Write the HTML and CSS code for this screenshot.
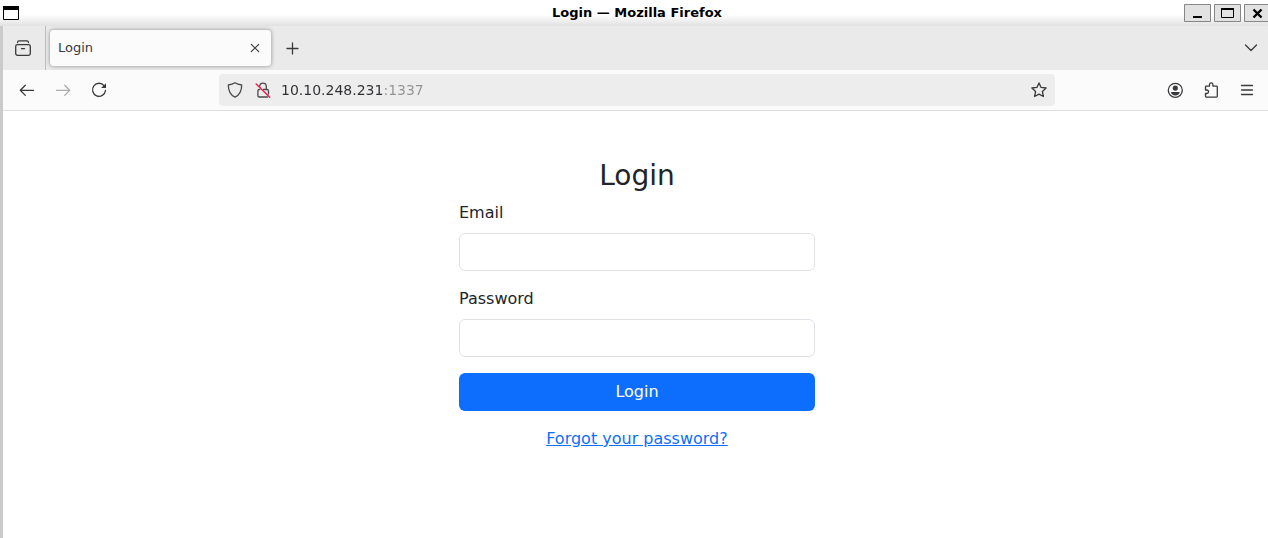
FILE: index.html
```html
<!DOCTYPE html>
<html lang="en">
<head>
<meta charset="utf-8">
<title>Login — Mozilla Firefox</title>
<link rel="stylesheet" href="styles.css">
</head>
<body>
<div class="window">
  <header class="titlebar">
    <button class="window-menu" aria-label="Window menu">
      <svg width="16" height="14" viewBox="0 0 16 14"><path fill="#fff" stroke="#000" d="M.5.5h15v13H.5z"/><path d="M0 0h16v4H0z"/></svg>
    </button>
    <div class="window-title">Login — Mozilla Firefox</div>
    <div class="window-controls">
      <button aria-label="Minimize"><svg width="27" height="18" viewBox="0 0 27 18"><path d="M9 12h9v2H9z"/></svg></button>
      <button aria-label="Maximize"><svg width="27" height="18" viewBox="0 0 27 18"><path fill="none" stroke="#000" d="M7.500 5v8.500h12V5"/><path d="M7 4h13v2H7z"/></svg></button>
      <button aria-label="Close"><svg width="27" height="18" viewBox="0 0 27 18"><path fill="none" stroke="#000" stroke-width="2.400" d="m9.500 5.500 8 8m0-8-8 8"/></svg></button>
    </div>
  </header>
  <div class="browser">
    <nav class="tabstrip">
      <button class="icon-button recent" aria-label="Recent browsing">
        <svg viewBox="0 0 16 16"><rect x=".7" y="4.700" width="14.600" height="10.600" rx="1.800"/><path d="M2.500 2.500Q2.700.9 4 .9h8q1.300 0 1.500 1.600M6.500 8.700h3"/></svg>
      </button>
      <div class="tab">
        <span>Login</span>
        <button class="icon-button tab-close" aria-label="Close tab"><svg viewBox="0 0 16 16"><path stroke-width="1.200" d="m4.300 4.300 7.400 7.400m0-7.400-7.400 7.400"/></svg></button>
      </div>
      <button class="icon-button new-tab" aria-label="New tab"><svg viewBox="0 0 16 16"><path d="M7.500 3v11M2 8.500h11"/></svg></button>
      <button class="icon-button all-tabs" aria-label="List all tabs"><svg viewBox="0 0 16 16"><path d="m2.500 5 5.500 5.500L13.500 5"/></svg></button>
    </nav>
    <div class="toolbar">
      <div class="group">
        <button class="icon-button" aria-label="Back"><svg viewBox="0 0 16 16"><path d="M14.500 8.300h-13M6.300 3.200 1.300 8.300l5 5.100"/></svg></button>
        <button class="icon-button" aria-label="Forward" disabled><svg viewBox="0 0 16 16"><path d="M1.500 8.300h13M9.700 3.200l5 5.100-5 5.100"/></svg></button>
        <button class="icon-button" aria-label="Reload"><svg viewBox="0 0 16 16"><path d="M13.200 3.800A6.500 6.500 0 1 0 14.500 8.500"/><path class="solid" d="M15 1.200v4.900H10.100z"/></svg></button>
      </div>
      <div class="urlbar">
        <svg class="url-icon" viewBox="0 0 16 16"><path d="M8 .8C6.200 2 4 2.700 1.300 3c0 5.500 2 10 6.700 12.200C12.700 13 14.700 8.500 14.700 3 12 2.700 9.800 2 8 .8z"/></svg>
        <svg class="url-icon" viewBox="0 0 16 16"><path d="M4.700 4.500a3.300 3.300 0 0 1 6.600 0v3h.9q1.300 0 1.300 1.300V12M8.500 7.500h2.800M4.700 7.500h-.5q-1.300 0-1.300 1.300v4.900q0 1.300 1.300 1.300h8.300"/><path class="slash" d="M1.200 2 14.700 15.300"/></svg>
        <input class="address" type="text" aria-label="Address" value="10.10.248.231:1337" spellcheck="false">
        <button class="icon-button star" aria-label="Bookmark this page"><svg viewBox="0 0 16 16"><path d="m8 .9 2.100 4.500 5 .6-3.700 3.500 1 5L8 12.200l-4.400 2.300 1-5L.9 6l5-.6z"/></svg></button>
      </div>
      <div class="group">
        <button class="icon-button" aria-label="Account"><svg viewBox="0 0 16 16"><circle cx="8.300" cy="8.300" r="7"/><circle class="solid" cx="8.300" cy="6.100" r="2.600"/><path class="solid" d="M4 9.900h8.600c0 2-2 3.500-4.300 3.500S4 11.900 4 9.900z"/></svg></button>
        <button class="icon-button" aria-label="Extensions"><svg viewBox="0 0 16 16"><path d="M2.500 8V4.900q0-.8.800-.8h3.200V2.600a1.700 1.700 0 0 1 3.400 0v1.500h3.600q.8 0 .8.800v9.400q0 .8-.8.800H3.300q-.8 0-.8-.8v-2.800h1.300a1.700 1.700 0 0 0 0-3.500z"/></svg></button>
        <button class="icon-button" aria-label="Menu"><svg viewBox="0 0 16 16"><path d="M2.500 3.500h11M2.500 8h11M2.500 12.500h11"/></svg></button>
      </div>
    </div>
    <main class="page">
      <form class="login">
        <h1>Login</h1>
        <div class="field"><label for="email">Email</label><input id="email" type="email"></div>
        <div class="field"><label for="password">Password</label><input id="password" type="password"></div>
        <button class="submit" type="submit">Login</button>
        <a class="forgot" href="#">Forgot your password?</a>
      </form>
    </main>
  </div>
</div>
</body>
</html>
```

FILE: styles.css
```css
* { box-sizing: border-box; }
html, body { margin: 0; height: 100%; }
body {
  overflow: hidden;
  background: #fff;
  font: 16px/24px "DejaVu Sans", sans-serif;
  color: #212529;
}
button, input { font: inherit; color: inherit; }
button { margin: 0; padding: 0; border: 0; background: none; }

/* The window runs a little past the right screen edge. */
.window {
  display: flex;
  flex-direction: column;
  width: calc(100% + 3px);
  min-height: 100%;
}
.titlebar {
  display: grid;
  grid-template-columns: 1fr auto 1fr;
  align-items: center;
  height: 26px;
  padding-left: 3px;
  background: linear-gradient(#fff 55%, #e2e2e2);
}
.window-menu { justify-self: start; display: flex; }
.window-title { font-size: 13px; font-weight: bold; color: #000; }
.window-controls { justify-self: end; display: flex; gap: 3px; }
.window-controls button { display: flex; background: #e2e2e2; border-radius: 1px; box-shadow: inset 0 0 0 1px #868686; }

.browser {
  flex: 1;
  display: flex;
  flex-direction: column;
  border-left: 3px solid #cbcbcb;
}
.icon-button {
  display: flex;
  align-items: center;
  justify-content: center;
  flex: none;
  width: 36px;
  height: 32px;
  color: #3a3a3d;
}
.icon-button:disabled { color: #adadad; }
.icon-button svg, .url-icon {
  width: 16px;
  height: 16px;
  fill: none;
  stroke: currentColor;
  stroke-width: 1.3;
  stroke-linecap: round;
  stroke-linejoin: round;
}
svg .solid { fill: currentColor; stroke: none; }
svg .slash { stroke: #f01f50; stroke-width: 1.5; }

.tabstrip {
  display: flex;
  align-items: center;
  height: 44px;
  background: #eaeaea;
}
.tabstrip .recent { width: 43px; height: 44px; padding-right: 2px; border-right: 1px solid #bdbdbd; }
.tab {
  display: flex;
  align-items: center;
  justify-content: space-between;
  width: 221px;
  height: 36px;
  margin-left: 4px;
  padding-left: 8px;
  border-radius: 4px;
  background: #fbfbfb;
  box-shadow: 0 0 4px #8c8c8c;
  font-size: 13px;
  color: #3a3a3d;
}
.tabstrip .tab-close { width: 32px; }
.tabstrip .new-tab { margin-left: 4px; }
.tabstrip .all-tabs { margin-left: auto; margin-right: 2px; }

.toolbar {
  display: flex;
  align-items: center;
  gap: 102px;
  height: 41px;
  padding: 0 6px;
  border-bottom: 1px solid #dedede;
  background: #fbfbfb;
}
.group { display: flex; }
.urlbar {
  flex: 1;
  display: flex;
  align-items: center;
  gap: 12px;
  height: 32px;
  padding-left: 8px;
  border-radius: 4px;
  background: #ededed;
}
.url-icon { flex: none; color: #4a4a4d; }
.address {
  flex: 1;
  min-width: 0;
  margin-left: -2px;
  padding: 0;
  border: 0;
  outline: 0;
  font-size: 14px;
  color: transparent;
  background: linear-gradient(to right, #2f2f33 102px, #929292 102px);
  -webkit-background-clip: text;
  background-clip: text;
}
.urlbar .star { width: 32px; }

.page { flex: 1; padding: 48px 12px; background: #fff; }
.login {
  display: flex;
  flex-direction: column;
  gap: 16px;
  max-width: 356px;
  margin: 0 auto;
}
h1 { margin: 0 0 -8px; font-size: 28px; font-weight: 400; line-height: 34px; text-align: center; }
.field { display: flex; flex-direction: column; gap: 8px; }
.field label { align-self: flex-start; }
.field input {
  width: 100%;
  height: 38px;
  padding: 6px 12px;
  border: 1px solid #dee2e6;
  border-radius: 6px;
  background: #fff;
}
.submit { height: 38px; border-radius: 6px; background: #0d6efd; color: #fff; }
.forgot { align-self: center; color: #0d6efd; }
```
